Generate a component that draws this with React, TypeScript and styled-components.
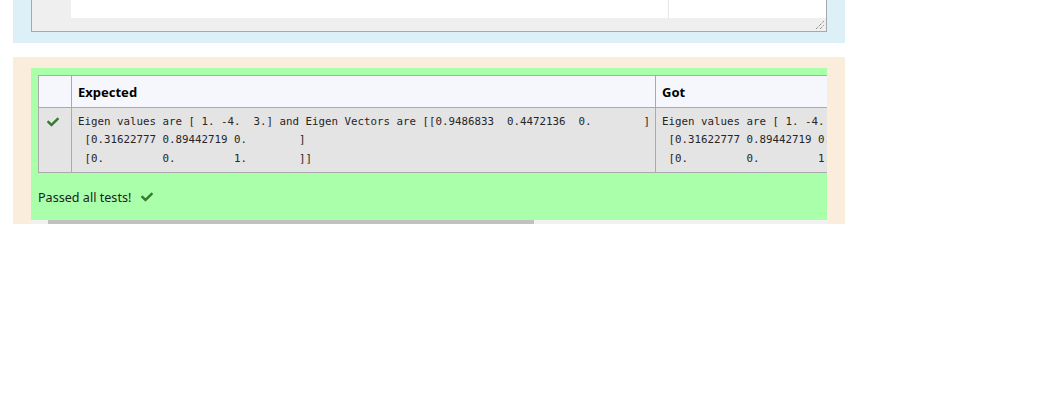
import React from "react";
import styled, { createGlobalStyle } from "styled-components";
import { FaCheck } from "react-icons/fa";

const GlobalStyle = createGlobalStyle`
  html, body { margin: 0; padding: 0; background: #ffffff; }
  body { font-family: "Noto Sans", "Open Sans", sans-serif; color: #1d2125; }
`;

const Page = styled.div`
  width: 832px;
  margin-left: 13px;
  display: flex;
  flex-direction: column;
  gap: 14px;
`;

const Formulation = styled.section`
  background: #def0f7;
  height: 43px;
  padding: 0 18px 11px 18px;
  box-sizing: border-box;
`;

const Editor = styled.div`
  position: relative;
  height: 32px;
  box-sizing: border-box;
  border: 1px solid #a8a8a8;
  border-top: none;
  background: #efefef;
  display: flex;
  flex-direction: column;
`;

const EditorBody = styled.div`
  display: flex;
  height: 18px;
`;

const Gutter = styled.div`
  width: 39px;
  background: #efefef;
`;

const CodeArea = styled.div`
  flex: 1;
  background: #ffffff;
  display: flex;
`;

const PrintMarginZone = styled.div`
  width: 597px;
  border-right: 1px solid #e6e6e6;
`;

const Grip = styled.svg`
  position: absolute;
  right: 1px;
  bottom: 1px;
`;

const Outcome = styled.section`
  background: #fbeddb;
  height: 167px;
  padding: 11px 18px 0 18px;
  box-sizing: border-box;
  overflow: hidden;
`;

const Results = styled.div`
  background: #aaffaa;
  overflow: hidden;
  padding: 7px 0 0 7px;
  height: 152px;
  box-sizing: border-box;
`;

const Table = styled.table`
  border-collapse: collapse;
  table-layout: fixed;
  width: 1202px;
`;

const HeadCell = styled.th<{ $w: number }>`
  width: ${(p) => p.$w}px;
  height: 32px;
  box-sizing: border-box;
  background: #f6f7fc;
  border: 1px solid #aaaaaa;
  text-align: left;
  padding: 1px 6px 0 6px;
  font-family: "Noto Sans", "Open Sans", sans-serif;
  font-weight: 700;
  font-size: 13px;
  color: #000000;
`;

const BodyCell = styled.td<{ $icon?: boolean }>`
  background: #e4e4e4;
  border: 1px solid #aaaaaa;
  vertical-align: top;
  padding: ${(p) => (p.$icon ? "8px 0 0 8px" : "5px 6px 4px 6px")};
  color: #357a32;
`;

const CellIcon = styled.span`
  display: block;
  line-height: 0;
  color: #357a32;
`;

const Pre = styled.pre`
  margin: 0;
  font-family: "DejaVu Sans Mono", "Liberation Mono", monospace;
  font-size: 10.8px;
  line-height: 18.3px;
  color: #262626;
  white-space: pre;
  overflow: hidden;
`;

const PassedLine = styled.div`
  height: 48px;
  padding-top: 1px;
  box-sizing: border-box;
  display: flex;
  align-items: center;
  gap: 10px;
  font-family: "Noto Sans", "Open Sans", sans-serif;
  font-size: 12.6px;
  color: #1d2125;
`;

const CheckMark = styled.span`
  display: inline-flex;
  color: #357a32;
`;

const Track = styled.div`
  height: 4px;
  background: #f1f1f1;
  padding-left: 17px;
  display: flex;
`;

const Thumb = styled.div`
  height: 4px;
  background: #c1c1c1;
`;

const output = `Eigen values are [ 1. -4.  3.] and Eigen Vectors are [[0.9486833  0.4472136  0.        ]
 [0.31622777 0.89442719 0.        ]
 [0.         0.         1.        ]]`;

export default function App() {
  const visible = 796;
  const content = 1248;
  const trackWidth = 762;
  const thumbWidth = Math.round((trackWidth * visible) / content);
  return (
    <>
      <GlobalStyle />
      <Page>
        <Formulation>
          <Editor>
            <EditorBody>
              <Gutter />
              <CodeArea>
                <PrintMarginZone />
              </CodeArea>
            </EditorBody>
            <Grip width="10" height="10" viewBox="0 0 10 10">
              <line x1="1" y1="9" x2="9" y2="1" stroke="#666" strokeWidth="1" strokeDasharray="1 1" />
              <line x1="5" y1="9" x2="9" y2="5" stroke="#666" strokeWidth="1" strokeDasharray="1 1" />
            </Grip>
          </Editor>
        </Formulation>
        <Outcome>
          <Results>
            <Table>
              <thead>
                <tr>
                  <HeadCell $w={33}></HeadCell>
                  <HeadCell $w={584}>Expected</HeadCell>
                  <HeadCell $w={585}>Got</HeadCell>
                </tr>
              </thead>
              <tbody>
                <tr>
                  <BodyCell $icon>
                    <CellIcon>
                      <FaCheck size={12} />
                    </CellIcon>
                  </BodyCell>
                  <BodyCell>
                    <Pre>{output}</Pre>
                  </BodyCell>
                  <BodyCell>
                    <Pre>{output}</Pre>
                  </BodyCell>
                </tr>
              </tbody>
            </Table>
            <PassedLine>
              <span>Passed all tests!</span>
              <CheckMark>
                <FaCheck size={12} />
              </CheckMark>
            </PassedLine>
          </Results>
          <Track>
            <Thumb style={{ width: thumbWidth }} />
          </Track>
        </Outcome>
      </Page>
    </>
  );
}
